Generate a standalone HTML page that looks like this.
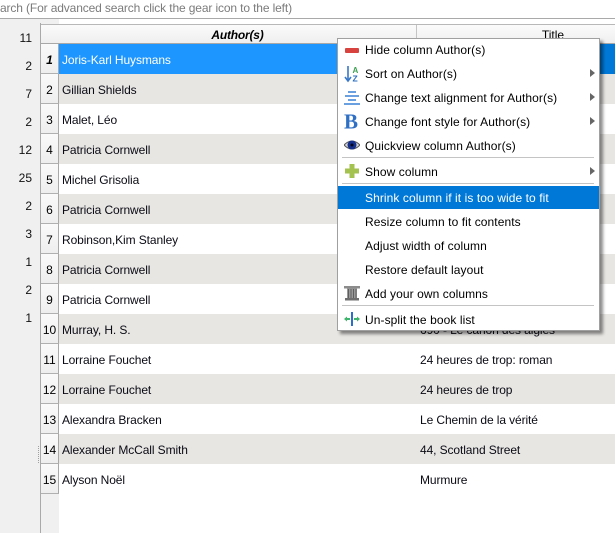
<!DOCTYPE html>
<html><head><meta charset="utf-8"><style>
*{box-sizing:border-box}
html,body{margin:0;padding:0;width:615px;height:533px;overflow:hidden;background:#fff}
body{position:relative;font:12px "Liberation Sans",sans-serif;color:#000}
.a{position:absolute;white-space:nowrap}
#search{left:0;top:0;width:615px;height:19px;background:#fff;border-bottom:1px solid #a9a9a9;color:#7b7b7b;font-size:12px;letter-spacing:-.13px;line-height:17px}
#side{left:0;top:19px;width:59px;height:514px;background:#f0f0f0}
.c{left:0;width:32px;text-align:right;height:16px;line-height:16px;color:#111;font-size:12px}
#tl{left:40px;top:23px;width:1px;height:510px;background:#a9a9a9}
#hd{left:41px;top:24px;width:574px;height:20px;background:linear-gradient(#fbfbfb,#efefef);border-top:1px solid #b8b8b8;border-bottom:1px solid #a8a8a8}
.ht{top:24px;height:20px;line-height:22px;text-align:center}
.r{left:59px;width:556px;height:30px}
.alt{background:#e8e6e3}
.n{left:41px;width:18px;height:30px;background:linear-gradient(#fafafa,#eeeeee);border-right:1px solid #a8a8a8;border-bottom:1px solid #b0b0b0;text-align:center;line-height:32px;font-size:12px}
.t{height:30px;line-height:32px;font-size:12px;letter-spacing:-.1px;color:#0a0a14}
#menu{left:337px;top:38px;width:263px;height:293px;background:#fff;border:1px solid #a0a0a0;box-shadow:3px 3px 3px rgba(0,0,0,.45)}
.m{left:365px;height:24px;line-height:24px;font-size:12px;letter-spacing:.08px;color:#000}
.sep{left:342px;width:252px;height:1px;background:#c4c4c4}
.arr{left:590px;width:0;height:0;border-left:5px solid #666;border-top:4.500px solid transparent;border-bottom:4.500px solid transparent}
svg{position:absolute}
</style></head><body>
<div class="a" id="search">arch (For advanced search click the gear icon to the left)</div>
<div class="a" id="side"></div>
<div class="a c" style="top:30px">11</div>
<div class="a c" style="top:58px">2</div>
<div class="a c" style="top:86px">7</div>
<div class="a c" style="top:114px">2</div>
<div class="a c" style="top:142px">12</div>
<div class="a c" style="top:170px">25</div>
<div class="a c" style="top:198px">2</div>
<div class="a c" style="top:226px">3</div>
<div class="a c" style="top:254px">1</div>
<div class="a c" style="top:282px">2</div>
<div class="a c" style="top:310px">1</div>
<div class="a" style="left:38px;top:446px;width:1px;height:17px;border-left:1px dotted #a0a0a0"></div>
<div class="a" id="tl"></div>
<div class="a" id="hd"></div>
<div class="a" style="left:416px;top:25px;width:1px;height:18px;background:#c4c4c4"></div>
<div class="a ht" style="left:59px;width:357px;font-weight:bold;font-style:italic;letter-spacing:-.2px">Author(s)</div>
<div class="a ht" style="left:417px;width:272px">Title</div>

<div class="a r" style="top:44px;background:#0078d7"></div>
<div class="a" style="left:59px;top:44px;width:358px;height:30px;background:#1e96ff"></div>
<div class="a r alt" style="top:74px"></div>
<div class="a r alt" style="top:134px"></div>
<div class="a r alt" style="top:194px"></div>
<div class="a r alt" style="top:254px"></div>
<div class="a r alt" style="top:314px"></div>
<div class="a r alt" style="top:374px"></div>
<div class="a r alt" style="top:434px"></div>

<div class="a n" style="top:44px;font-weight:bold;font-style:italic">1</div>
<div class="a n" style="top:74px">2</div>
<div class="a n" style="top:104px">3</div>
<div class="a n" style="top:134px">4</div>
<div class="a n" style="top:164px">5</div>
<div class="a n" style="top:194px">6</div>
<div class="a n" style="top:224px">7</div>
<div class="a n" style="top:254px">8</div>
<div class="a n" style="top:284px">9</div>
<div class="a n" style="top:314px">10</div>
<div class="a n" style="top:344px">11</div>
<div class="a n" style="top:374px">12</div>
<div class="a n" style="top:404px">13</div>
<div class="a n" style="top:434px">14</div>
<div class="a n" style="top:464px">15</div>

<div class="a t" style="left:62px;top:44px;color:#fff">Joris-Karl Huysmans</div>
<div class="a t" style="left:62px;top:74px">Gillian Shields</div>
<div class="a t" style="left:62px;top:104px">Malet, Léo</div>
<div class="a t" style="left:62px;top:134px">Patricia Cornwell</div>
<div class="a t" style="left:62px;top:164px">Michel Grisolia</div>
<div class="a t" style="left:62px;top:194px">Patricia Cornwell</div>
<div class="a t" style="left:62px;top:224px">Robinson,Kim Stanley</div>
<div class="a t" style="left:62px;top:254px">Patricia Cornwell</div>
<div class="a t" style="left:62px;top:284px">Patricia Cornwell</div>
<div class="a t" style="left:62px;top:314px">Murray, H. S.</div>
<div class="a t" style="left:62px;top:344px">Lorraine Fouchet</div>
<div class="a t" style="left:62px;top:374px">Lorraine Fouchet</div>
<div class="a t" style="left:62px;top:404px">Alexandra Bracken</div>
<div class="a t" style="left:62px;top:434px">Alexander McCall Smith</div>
<div class="a t" style="left:62px;top:464px">Alyson Noël</div>

<div class="a t" style="left:420px;top:314px">690 - Le canon des aigles</div>
<div class="a t" style="left:420px;top:344px">24 heures de trop: roman</div>
<div class="a t" style="left:420px;top:374px">24 heures de trop</div>
<div class="a t" style="left:420px;top:404px">Le Chemin de la vérité</div>
<div class="a t" style="left:420px;top:434px">44, Scotland Street</div>
<div class="a t" style="left:420px;top:464px">Murmure</div>

<div class="a" id="menu"></div>
<div class="a" style="left:338px;top:186px;width:261px;height:23px;background:#0078d7"></div>
<div class="a m" style="top:38px">Hide column Author(s)</div>
<div class="a m" style="top:62px">Sort on Author(s)</div>
<div class="a m" style="top:86px">Change text alignment for Author(s)</div>
<div class="a m" style="top:110px">Change font style for Author(s)</div>
<div class="a m" style="top:134px">Quickview column Author(s)</div>
<div class="a sep" style="top:157px"></div>
<div class="a m" style="top:160px">Show column</div>
<div class="a sep" style="top:183px"></div>
<div class="a m" style="top:186px;color:#fff">Shrink column if it is too wide to fit</div>
<div class="a m" style="top:210px">Resize column to fit contents</div>
<div class="a m" style="top:234px">Adjust width of column</div>
<div class="a m" style="top:258px">Restore default layout</div>
<div class="a m" style="top:282px">Add your own columns</div>
<div class="a sep" style="top:305px"></div>
<div class="a m" style="top:308px">Un-split the book list</div>
<div class="a arr" style="top:69px"></div>
<div class="a arr" style="top:93px"></div>
<div class="a arr" style="top:117px"></div>
<div class="a arr" style="top:167px"></div>

<svg style="left:344px;top:42px" width="16" height="16"><rect x="1" y="6" width="14" height="5" rx="1" fill="#d9433f"/></svg>
<svg style="left:344px;top:65px" width="16" height="18"><path d="M4 1V15M1 12L4 16L7 12" stroke="#3878c8" stroke-width="1.6" fill="none"/><text x="8.500" y="8" font-size="8" font-weight="bold" fill="#3aa050" font-family="Liberation Sans">A</text><text x="8.500" y="16.500" font-size="8.500" font-weight="bold" fill="#2a6cc0" font-family="Liberation Sans">Z</text></svg>
<svg style="left:344px;top:90px" width="16" height="16"><g fill="#6a9fe0"><rect x="4" y="1" width="8" height="2"/><rect x="1" y="5" width="14" height="2"/><rect x="4" y="9" width="8" height="2"/><rect x="0" y="13" width="16" height="2"/></g></svg>
<svg style="left:344px;top:112px" width="16" height="18"><text x="0" y="16.500" font-size="21" font-weight="bold" fill="#2f6fc4" font-family="Liberation Serif">B</text></svg>
<svg style="left:344px;top:137px" width="16" height="16"><path d="M0 8Q8 0 16 8Q8 16 0 8Z" fill="#d8d8d8" stroke="#555" stroke-width="1"/><circle cx="8" cy="8" r="4.500" fill="#14308c"/><circle cx="8" cy="8" r="1.500" fill="#050515"/></svg>
<svg style="left:344px;top:163px" width="16" height="16"><path d="M5.500 1H10.500V5.500H15V10.500H10.500V15H5.500V10.500H1V5.500H5.500Z" fill="#a4c250"/></svg>
<svg style="left:344px;top:285px" width="16" height="16"><path d="M0 1H16V3.500H0Z" fill="#8c8c8c"/><path d="M3 3.500H13V13H3Z" fill="#999"/><path d="M4.500 4V13M7 4V13M9.500 4V13M12 4V13" stroke="#5e5e5e"/><path d="M1 13H15V15.500H1Z" fill="#6e6e6e"/></svg>
<svg style="left:344px;top:311px" width="16" height="16"><path d="M7 1H9V15H7Z" fill="#2a6fc9"/><path d="M0 8L3 5.500V7H6V9H3V10.500ZM16 8L13 5.500V7H10V9H13V10.500Z" fill="#3db56a"/></svg>
</body></html>
